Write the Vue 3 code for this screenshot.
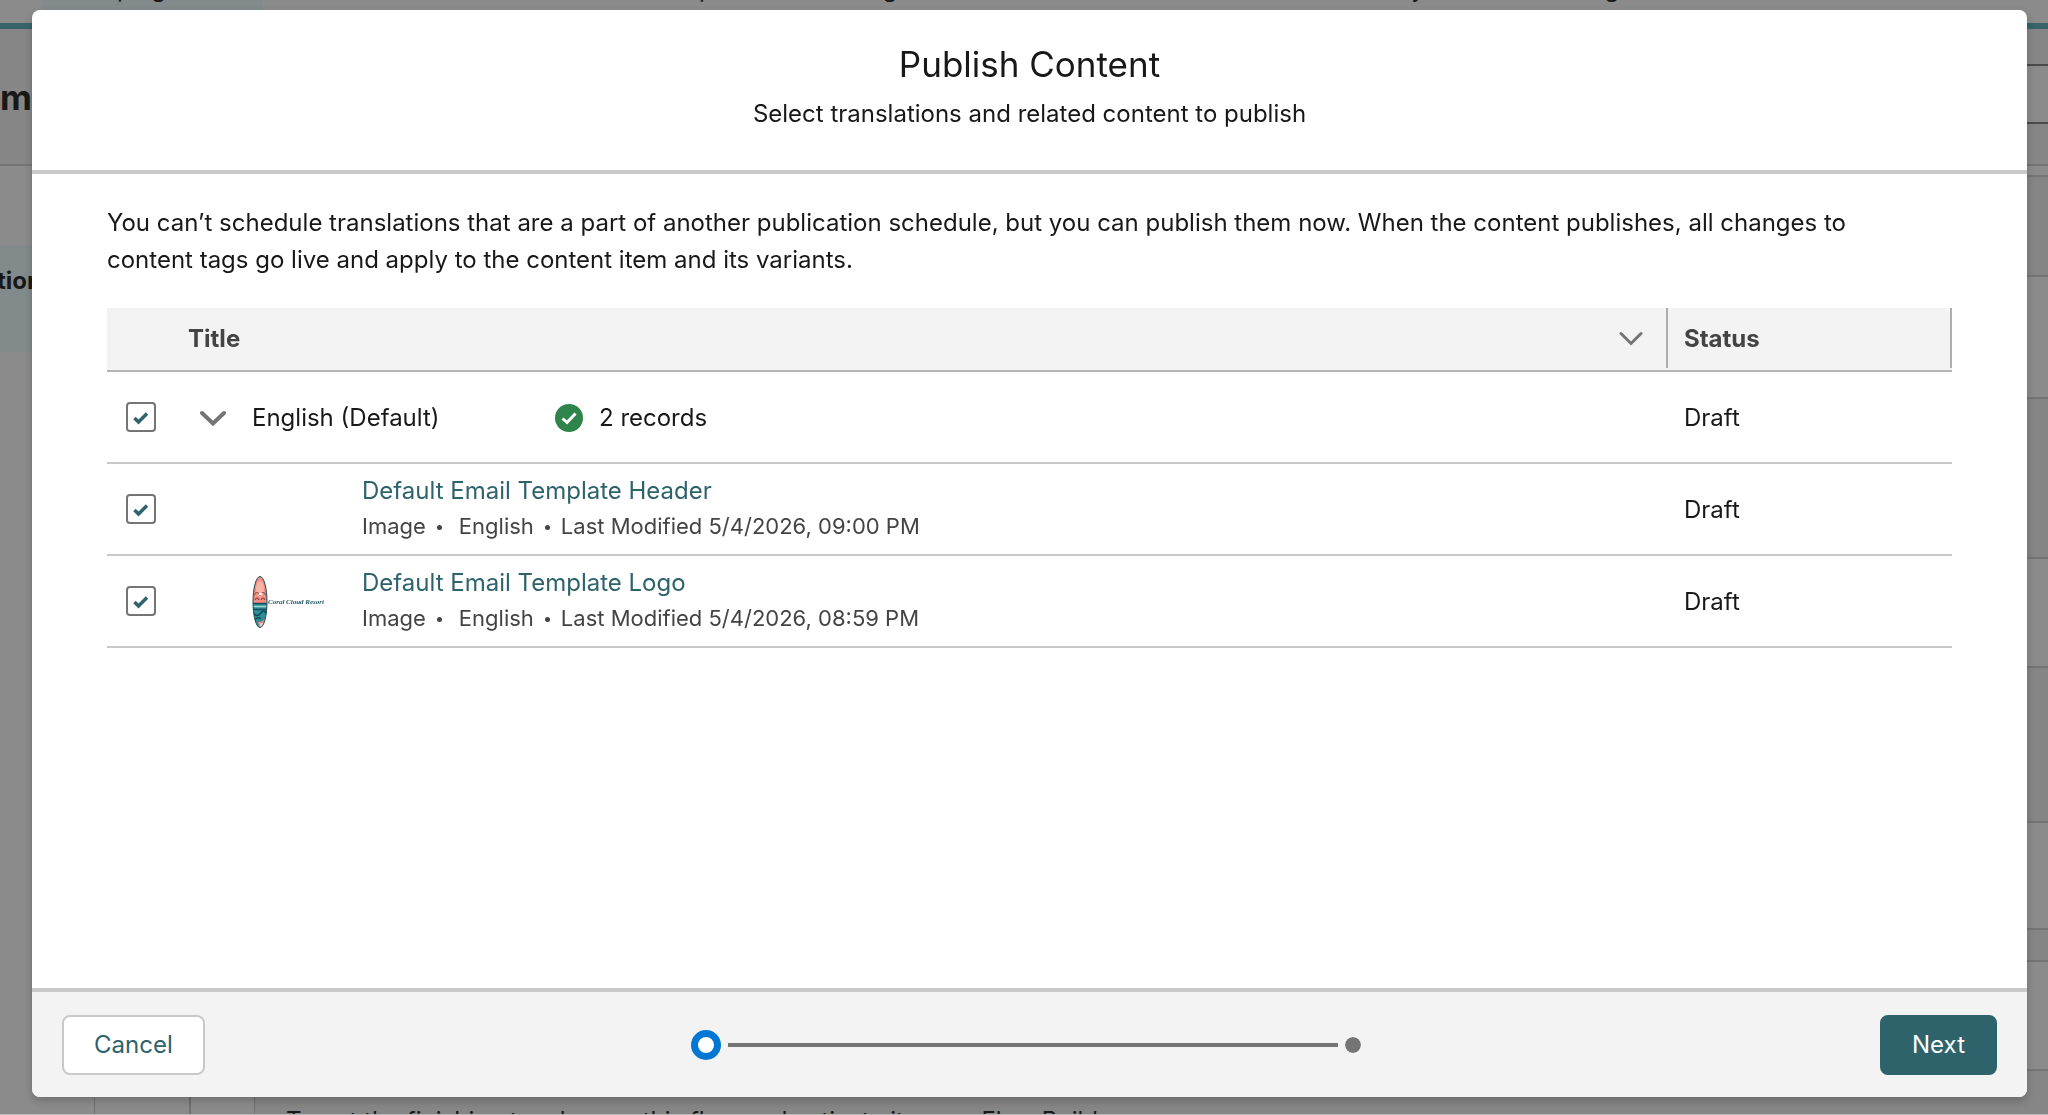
<script setup>
import { ref } from 'vue'

const languageChecked = ref(true)
const records = ref([
  { id: 'header', name: 'Default Email Template Header', modified: '5/4/2026, 09:00 PM', logo: false, checked: true },
  { id: 'logo', name: 'Default Email Template Logo', modified: '5/4/2026, 08:59 PM', logo: true, checked: true },
])
</script>

<template>
  <div class="page">
    <div class="backdrop" aria-hidden="true">
      <div class="nav">
        <span class="tab active">Campaigns</span>
        <span class="tab reports">Reports</span>
        <span class="tab segments">Segments</span>
        <span class="tab analytics">Analytics</span>
        <span class="tab">Settings</span>
      </div>
      <div class="page-header">
        <span class="page-title">Cam</span>
        <span class="header-button"></span>
      </div>
      <div class="workspace">
        <div class="side"><div class="side-item"><span>Action</span></div></div>
        <div class="cards">
          <i class="card c1"></i><i class="card c2"></i><i class="card c3"></i><i class="card c4"></i>
          <i class="card c5"></i><i class="card c6"></i><i class="card c7"></i><i class="card c8"></i>
        </div>
      </div>
      <div class="flow-note">
        <i class="rail r1"></i><i class="rail r2"></i><i class="rail r3"></i>
        <span>To get the finishing touches on this flow and activate it, open Flow Builder.</span>
      </div>
    </div>

    <section class="modal" role="dialog" aria-modal="true" aria-labelledby="modal-title">
      <header class="modal-header">
        <h1 id="modal-title">Publish Content</h1>
        <p>Select translations and related content to publish</p>
      </header>

      <main class="modal-body">
        <p class="intro">
          You can’t schedule translations that are a part of another publication schedule, but you can publish them now. When the content publishes, all changes to content tags go live and apply to the content item and its variants.
        </p>

        <table>
          <colgroup><col class="col-check" /><col /><col class="col-status" /></colgroup>
          <thead>
            <tr>
              <th></th>
              <th scope="col" class="title-head">
                <div class="head-cell">
                  <span>Title</span>
                  <button class="icon-button" type="button" aria-label="Title column actions">
                    <svg width="24" height="16" viewBox="0 0 24 16"><path d="M2 3.500 12 13.500 22 3.500" /></svg>
                  </button>
                </div>
              </th>
              <th scope="col" class="status-head"><div class="head-cell">Status</div></th>
            </tr>
          </thead>
          <tbody>
            <tr>
              <td class="check"><input v-model="languageChecked" type="checkbox" aria-label="Select English (Default)" /></td>
              <td>
                <div class="language">
                  <button class="icon-button toggle" type="button" aria-label="Collapse English (Default)">
                    <svg width="26" height="18" viewBox="0 0 26 18"><path d="M2 5 13 15.500 24 5" /></svg>
                  </button>
                  <span class="language-name">English (Default)</span>
                  <svg class="success" width="28" height="30" viewBox="0 0 28 30">
                    <circle cx="14" cy="16" r="14" />
                    <path d="M7.500 16.500 12 20.500 20.500 11.500" />
                  </svg>
                  <span>2 records</span>
                </div>
              </td>
              <td class="status">Draft</td>
            </tr>
            <tr v-for="record in records" :key="record.id">
              <td class="check"><input v-model="record.checked" type="checkbox" :aria-label="`Select ${record.name}`" /></td>
              <td>
                <div class="record">
                  <div class="thumb">
                    <svg v-if="record.logo" width="74" height="54" viewBox="0 0 74 54" role="img" aria-label="Coral Cloud Resort">
                      <defs><clipPath id="board"><ellipse cx="8" cy="28" rx="7" ry="25.500" /></clipPath></defs>
                      <g clip-path="url(#board)">
                        <rect width="16" height="54" fill="#f48c7f" />
                        <ellipse cx="8" cy="15" rx="4" ry="8" fill="#fbb3a3" />
                        <path d="M2 21q3-5 6 0q3-5 6 0M3 26q2-4 4 0M9 26q2-4 4 0" fill="none" stroke="#8c4a4d" stroke-width="1.200" />
                        <path d="M7 20h3" stroke="#fff" stroke-width="2" />
                        <rect y="29" width="16" height="26" fill="#2c8f95" />
                        <path d="M0 29.500h16M0 35.500h16" stroke="#17505c" stroke-width="1.500" />
                        <path d="M0 32.500h16" stroke="#9fd6cf" stroke-width="1.500" />
                        <path d="M1 39q4 5 8 0t6 3M3 46q3-4 6-1" fill="none" stroke="#15485a" stroke-width="1.500" />
                        <path d="M16 42q-2 8-9 7l1 6h8z" fill="#fbc6b4" />
                        <path d="M14 40q1 8-8 9" fill="none" stroke="#f4877c" stroke-width="1.500" />
                      </g>
                      <ellipse cx="8" cy="28" rx="7" ry="25.500" fill="none" stroke="#1b4d59" stroke-width="1" />
                      <text class="logo-text" x="16" y="30">Coral Cloud Resort</text>
                    </svg>
                  </div>
                  <div class="details">
                    <a href="#">{{ record.name }}</a>
                    <div class="meta">
                      <span>Image</span><i class="dot"></i><span class="locale">English</span><i class="dot tight"></i><span>Last Modified {{ record.modified }}</span>
                    </div>
                  </div>
                </div>
              </td>
              <td class="status">Draft</td>
            </tr>
          </tbody>
        </table>
      </main>

      <footer class="modal-footer">
        <button class="button neutral" type="button">Cancel</button>
        <ol class="progress" aria-label="Step 1 of 2">
          <li class="step current"></li>
          <li class="line"></li>
          <li class="step upcoming"></li>
        </ol>
        <button class="button brand" type="button">Next</button>
      </footer>
    </section>
  </div>
</template>

<style>
body {
  margin: 0;
}
</style>

<style scoped>
* {
  box-sizing: border-box;
}

.page {
  min-height: 100vh;
  font-family: Inter, "Liberation Sans", sans-serif;
  font-size: 24px;
  line-height: 37px;
  color: #181818;
}

/* Dimmed page behind the dialog */
.backdrop {
  display: flex;
  flex-direction: column;
  height: 100vh;
  overflow: hidden;
  background: #8b8b8b;
  border-bottom: 1px solid #b9b9b9;
}

.nav {
  flex: none;
  display: flex;
  height: 29px;
  padding-left: 42px;
  border-bottom: 6px solid #37636a;
  overflow: hidden;
}

.tab {
  flex: none;
  display: flex;
  align-items: flex-end;
  height: 23px;
  padding-bottom: 16px;
}

.active {
  width: 221px;
  margin-right: 407px;
  padding-left: 23px;
  background: #828a8c;
}

.reports { width: 183px; }
.segments { width: 508px; }
.analytics { width: 179px; }

.page-header {
  flex: none;
  display: flex;
  justify-content: space-between;
  align-items: center;
  height: 137px;
  padding-bottom: 6px;
  background: #868686;
  border-bottom: 2px solid #747474;
}

.page-title {
  display: flex;
  justify-content: flex-end;
  width: 32px;
  padding-top: 8px;
  font-size: 35px;
  font-weight: 700;
}

.header-button {
  width: 64px;
  height: 60px;
  background: #8b8b8b;
  border: solid #4b4b4b;
  border-width: 2px 0;
}

.workspace {
  flex: 1;
  display: flex;
  justify-content: space-between;
  min-height: 0;
}

.side {
  width: 32px;
  padding-top: 79px;
}

.side-item {
  display: flex;
  justify-content: flex-end;
  height: 107px;
  padding-top: 17px;
  background: #828a8c;
  font-weight: 700;
}

.side-item span {
  flex: none;
  margin-right: -10px;
}

.cards {
  display: flex;
  flex-direction: column;
  width: 32px;
  padding-top: 9px;
}

.card {
  flex: none;
  background: #8b8b8b;
  border-top: 2px solid #747474;
}

.c1, .c3, .c5, .c7 {
  background: #858585;
}

.c1 { height: 100px; }
.c2 { height: 122px; }
.c3 { height: 160px; }
.c4 { height: 109px; }
.c5 { height: 155px; }
.c6 { height: 107px; }
.c7 { height: 32px; }
.c8 { height: 110px; }

.flow-note {
  flex: none;
  display: flex;
  height: 45px;
  padding-left: 94px;
  background: #8b8b8b;
}

.flow-note span {
  flex: 1;
  padding: 31px 0 0 31px;
  border-top: 2px solid #747474;
  white-space: nowrap;
  background: #868686;
}

.rail {
  flex: none;
  border-left: 1px solid #707070;
}

.r1 { width: 95px; }
.r2 { width: 65px; border-left-width: 2px; }
.r3 { width: 1px; }

/* Dialog */
.modal {
  position: fixed;
  inset: 10px 21px 18px 32px;
  display: flex;
  flex-direction: column;
  border-radius: 8px;
  overflow: hidden;
  background: #fff;
  box-shadow: 0 4px 8px rgba(0, 0, 0, 0.2);
}

.modal-header {
  padding: 31px 30px 38px;
  border-bottom: 4px solid #c9c9c9;
  text-align: center;
}

.modal-header h1 {
  margin: 0 0 8px;
  font-size: 35px;
  font-weight: 400;
  line-height: 46px;
}

.modal-header p {
  margin: 0;
}

.modal-body {
  flex: 1;
  min-height: 0;
  padding: 30px 75px;
  overflow: hidden;
}

.intro {
  margin: 0 0 30px;
  padding-right: 40px;
}

table {
  width: 100%;
  table-layout: fixed;
  border-collapse: separate;
  border-spacing: 0;
}

.col-check { width: 65px; }
.col-status { width: 284px; }

th {
  height: 64px;
  padding: 0 0 2px;
  background: #f3f3f3;
  border-bottom: 2px solid #b4b4b4;
  color: #444;
  font-weight: 700;
  text-align: left;
}

.head-cell {
  display: flex;
  align-items: center;
  justify-content: space-between;
  height: 60px;
  padding: 0 23px 0 16px;
  border-right: 2px solid #aeaeae;
}

td {
  height: 92px;
  padding: 0;
  border-bottom: 2px solid #c9c9c9;
}

.check {
  padding-left: 19px;
}

.status {
  padding-left: 16px;
}

input[type="checkbox"] {
  appearance: none;
  display: block;
  width: 30px;
  height: 30px;
  margin: 0;
  border: 2px solid #747474;
  border-radius: 4px;
  background: #fff;
}

input[type="checkbox"]:checked {
  background: #fff url("data:image/svg+xml,%3Csvg xmlns='http://www.w3.org/2000/svg' viewBox='0 0 26 26'%3E%3Cpath d='M6.500 14 10.500 18 19 9.500' fill='none' stroke='%232e636c' stroke-width='3.500'/%3E%3C/svg%3E") center / 26px 26px no-repeat;
}

.icon-button {
  display: flex;
  padding: 0;
  border: 0;
  background: none;
}

.icon-button path {
  fill: none;
  stroke: #747474;
  stroke-width: 3;
  stroke-linecap: round;
}

.toggle path {
  stroke-width: 4;
}

.language {
  display: flex;
  align-items: center;
  padding-left: 28px;
}

.toggle {
  margin-right: 26px;
}

.language-name {
  width: 303px;
}

.success {
  margin-right: 16px;
}

.success circle {
  fill: #2e844a;
}

.success path {
  fill: none;
  stroke: #fff;
  stroke-width: 3;
}

.record {
  display: flex;
  align-items: center;
  padding-left: 80px;
}

.thumb {
  display: flex;
  width: 110px;
}

.logo-text {
  font-family: "Liberation Serif", serif;
  font-size: 7px;
  font-style: italic;
  font-weight: 700;
  fill: #245a66;
}

.details {
  padding-bottom: 4px;
}

.details a {
  color: #2e636c;
  text-decoration: none;
}

.meta {
  display: flex;
  align-items: center;
  color: #444;
  font-size: 22px;
  line-height: 34px;
}

.dot {
  width: 5px;
  height: 5px;
  margin: 4px 17px 0 11px;
  border-radius: 50%;
  background: #444;
}

.dot.tight {
  margin-right: 11px;
}

.modal-footer {
  display: grid;
  grid-template-columns: 1fr 35% 1fr;
  align-items: center;
  height: 109px;
  padding: 0 30px;
  border-top: 4px solid #c9c9c9;
  background: #f3f3f3;
}

.button {
  justify-self: start;
  height: 60px;
  padding: 0 30px;
  border: 2px solid #c9c9c9;
  border-radius: 8px;
  background: #fff;
  color: #2e636c;
  font: inherit;
}

.brand {
  justify-self: end;
  border-color: #2e636c;
  background: #2e636c;
  color: #fff;
}

.progress {
  display: flex;
  align-items: center;
  margin: 0;
  padding: 0;
  list-style: none;
}

.step {
  width: 30px;
  height: 30px;
  border-radius: 50%;
}

.current {
  margin-right: 7px;
  border: 7px solid #0176d3;
  background: #fff;
}

.upcoming {
  border: 7px solid #f3f3f3;
  background: #747474;
  background-clip: padding-box;
}

.line {
  flex: 1;
  height: 4px;
  background: #747474;
}
</style>
